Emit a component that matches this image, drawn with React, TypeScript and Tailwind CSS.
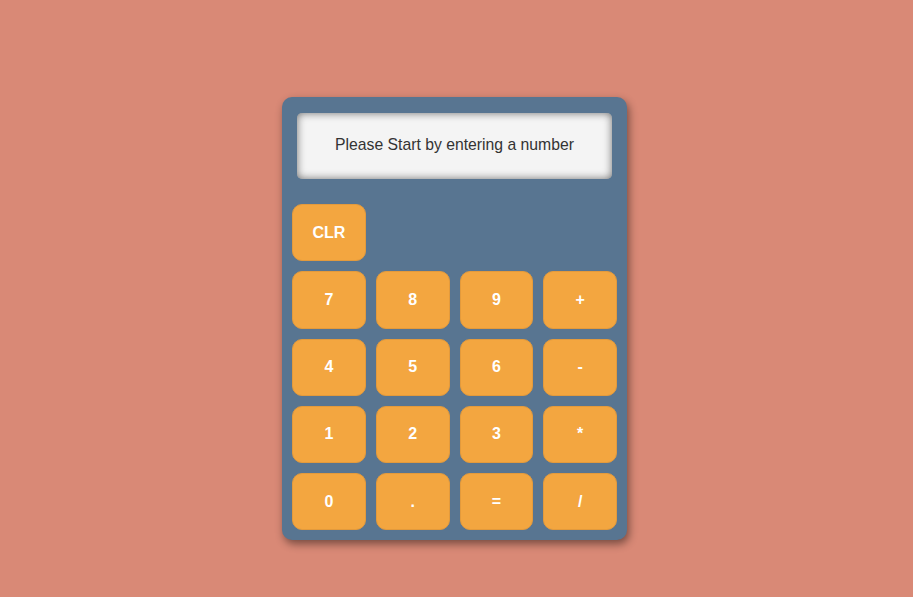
import React from 'react'

const rows = [
  ['7', '8', '9', '+'],
  ['4', '5', '6', '-'],
  ['1', '2', '3', '*'],
  ['0', '.', '=', '/'],
]

const btn =
  'h-[57.25px] rounded-[10px] border border-[#e39a3c] bg-[#f3a640] text-[16px] font-bold text-white'

export default function App() {
  return (
    <div
      className="flex min-h-[597px] justify-center bg-[#d98976] pr-1 pt-[97px]"
      style={{ fontFamily: '"Liberation Sans", Arial, sans-serif' }}
    >
      <div className="h-fit w-[345px] rounded-[10px] bg-[#587591] px-[10px] pb-[10px] pt-[16px] shadow-[2px_4px_8px_rgba(0,0,0,0.45)]">
        <div className="mx-[5px] flex h-[66px] items-center justify-center rounded-[5px] bg-[#f4f4f4] pb-[2px] text-[15.75px] text-[#333] shadow-[inset_0_0_9px_rgba(0,0,0,0.55)]">
          Please Start by entering a number
        </div>
        <div className="mt-[25px] grid grid-cols-4 gap-[10px]">
          <button className={btn}>CLR</button>
          <div className="col-span-3" />
          {rows.flat().map((k) => (
            <button key={k} className={btn}>
              {k}
            </button>
          ))}
        </div>
      </div>
    </div>
  )
}
